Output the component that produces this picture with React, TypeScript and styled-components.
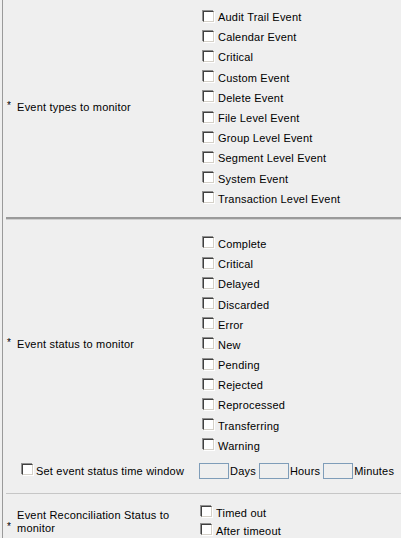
import React from "react";
import styled, { createGlobalStyle } from "styled-components";

const Global = createGlobalStyle`
  html, body { margin: 0; padding: 0; background: #efefef; }
  body { font-family: "Liberation Sans", Arial, sans-serif; font-size: 11px; letter-spacing: 0.2px; color: #000; }
`;

const Page = styled.div`
  width: 401px;
  height: 538px;
  overflow: hidden;
  background: #efefef;
  border-left: 1px solid #9a9a9a;
  margin-left: 2px;
  box-sizing: border-box;
`;

const Section = styled.div<{ $pt: number; $pb: number }>`
  display: grid;
  grid-template-columns: 196px 1fr;
  padding-top: ${(p) => p.$pt}px;
  padding-bottom: ${(p) => p.$pb}px;
`;

const Label = styled.div`
  display: flex;
  align-items: center;
  gap: 6px;
  padding-left: 4px;
  line-height: 13px;
`;

const Asterisk = styled.span<{ $low?: boolean }>`
  font-size: 10px;
  align-self: center;
  position: relative;
  top: ${(p) => (p.$low ? "5px" : "-2px")};
`;

const Options = styled.div<{ $row: number; $indent: number }>`
  display: flex;
  flex-direction: column;
  padding-left: ${(p) => p.$indent}px;
  & > label { height: ${(p) => p.$row}px; }
`;

const Option = styled.label`
  display: flex;
  align-items: center;
  gap: 4px;
  white-space: nowrap;
`;

const Check = styled.input.attrs({ type: "checkbox" })`
  appearance: none;
  margin: 0;
  width: 11px;
  height: 11px;
  flex: none;
  background: #fff;
  border-top: 1px solid #404040;
  border-left: 1px solid #404040;
  border-right: 1px solid #d4d0c8;
  border-bottom: 1px solid #d4d0c8;
  box-shadow: -1px -1px 0 #909090, 1px 1px 0 #ffffff;
  box-sizing: border-box;
  position: relative;
  top: -1px;
`;

const Rule = styled.div<{ $strong?: boolean }>`
  margin-left: 3px;
  height: ${(p) => (p.$strong ? "2px" : "1px")};
  background: ${(p) => (p.$strong ? "#9a9a9a" : "#c6c6c6")};
  border-bottom: ${(p) => (p.$strong ? "1px solid #d0d0d0" : "none")};
`;

const TimeRow = styled.div`
  display: grid;
  grid-template-columns: 196px 1fr;
  height: 30px;
  align-items: center;
  margin-bottom: 7px;
`;

const TimeLabel = styled.label`
  display: flex;
  align-items: center;
  gap: 3px;
  padding-left: 19px;
`;

const TimeFields = styled.div`
  display: flex;
  align-items: center;
`;

const Field = styled.input`
  width: 30px;
  height: 16px;
  box-sizing: border-box;
  margin: 0 1px 0 0;
  padding: 0;
  background: #efefef;
  border: 1px solid #7f9db9;
`;

const Unit = styled.span`
  margin-right: 3px;
`;

const types = [
  "Audit Trail Event",
  "Calendar Event",
  "Critical",
  "Custom Event",
  "Delete Event",
  "File Level Event",
  "Group Level Event",
  "Segment Level Event",
  "System Event",
  "Transaction Level Event",
];

const statuses = [
  "Complete",
  "Critical",
  "Delayed",
  "Discarded",
  "Error",
  "New",
  "Pending",
  "Rejected",
  "Reprocessed",
  "Transferring",
  "Warning",
];

export default function App() {
  return (
    <>
      <Global />
      <Page>
        <Section $pt={7} $pb={8}>
          <Label>
            <Asterisk>*</Asterisk>
            <span>Event types to monitor</span>
          </Label>
          <Options $row={20.2} $indent={4}>
            {types.map((t) => (
              <Option key={t}>
                <Check />
                {t}
              </Option>
            ))}
          </Options>
        </Section>
        <Rule $strong />
        <Section $pt={14} $pb={0}>
          <Label>
            <Asterisk>*</Asterisk>
            <span>Event status to monitor</span>
          </Label>
          <Options $row={20.2} $indent={4}>
            {statuses.map((t) => (
              <Option key={t}>
                <Check />
                {t}
              </Option>
            ))}
          </Options>
        </Section>
        <TimeRow>
          <TimeLabel>
            <Check />
            Set event status time window
          </TimeLabel>
          <TimeFields>
            <Field />
            <Unit>Days</Unit>
            <Field />
            <Unit>Hours</Unit>
            <Field />
            <Unit>Minutes</Unit>
          </TimeFields>
        </TimeRow>
        <Rule />
        <Section $pt={10} $pb={0}>
          <Label>
            <Asterisk $low>*</Asterisk>
            <span>
              Event Reconciliation Status to
              <br />
              monitor
            </span>
          </Label>
          <Options $row={18} $indent={2}>
            <Option>
              <Check />
              Timed out
            </Option>
            <Option>
              <Check />
              After timeout
            </Option>
          </Options>
        </Section>
      </Page>
    </>
  );
}
